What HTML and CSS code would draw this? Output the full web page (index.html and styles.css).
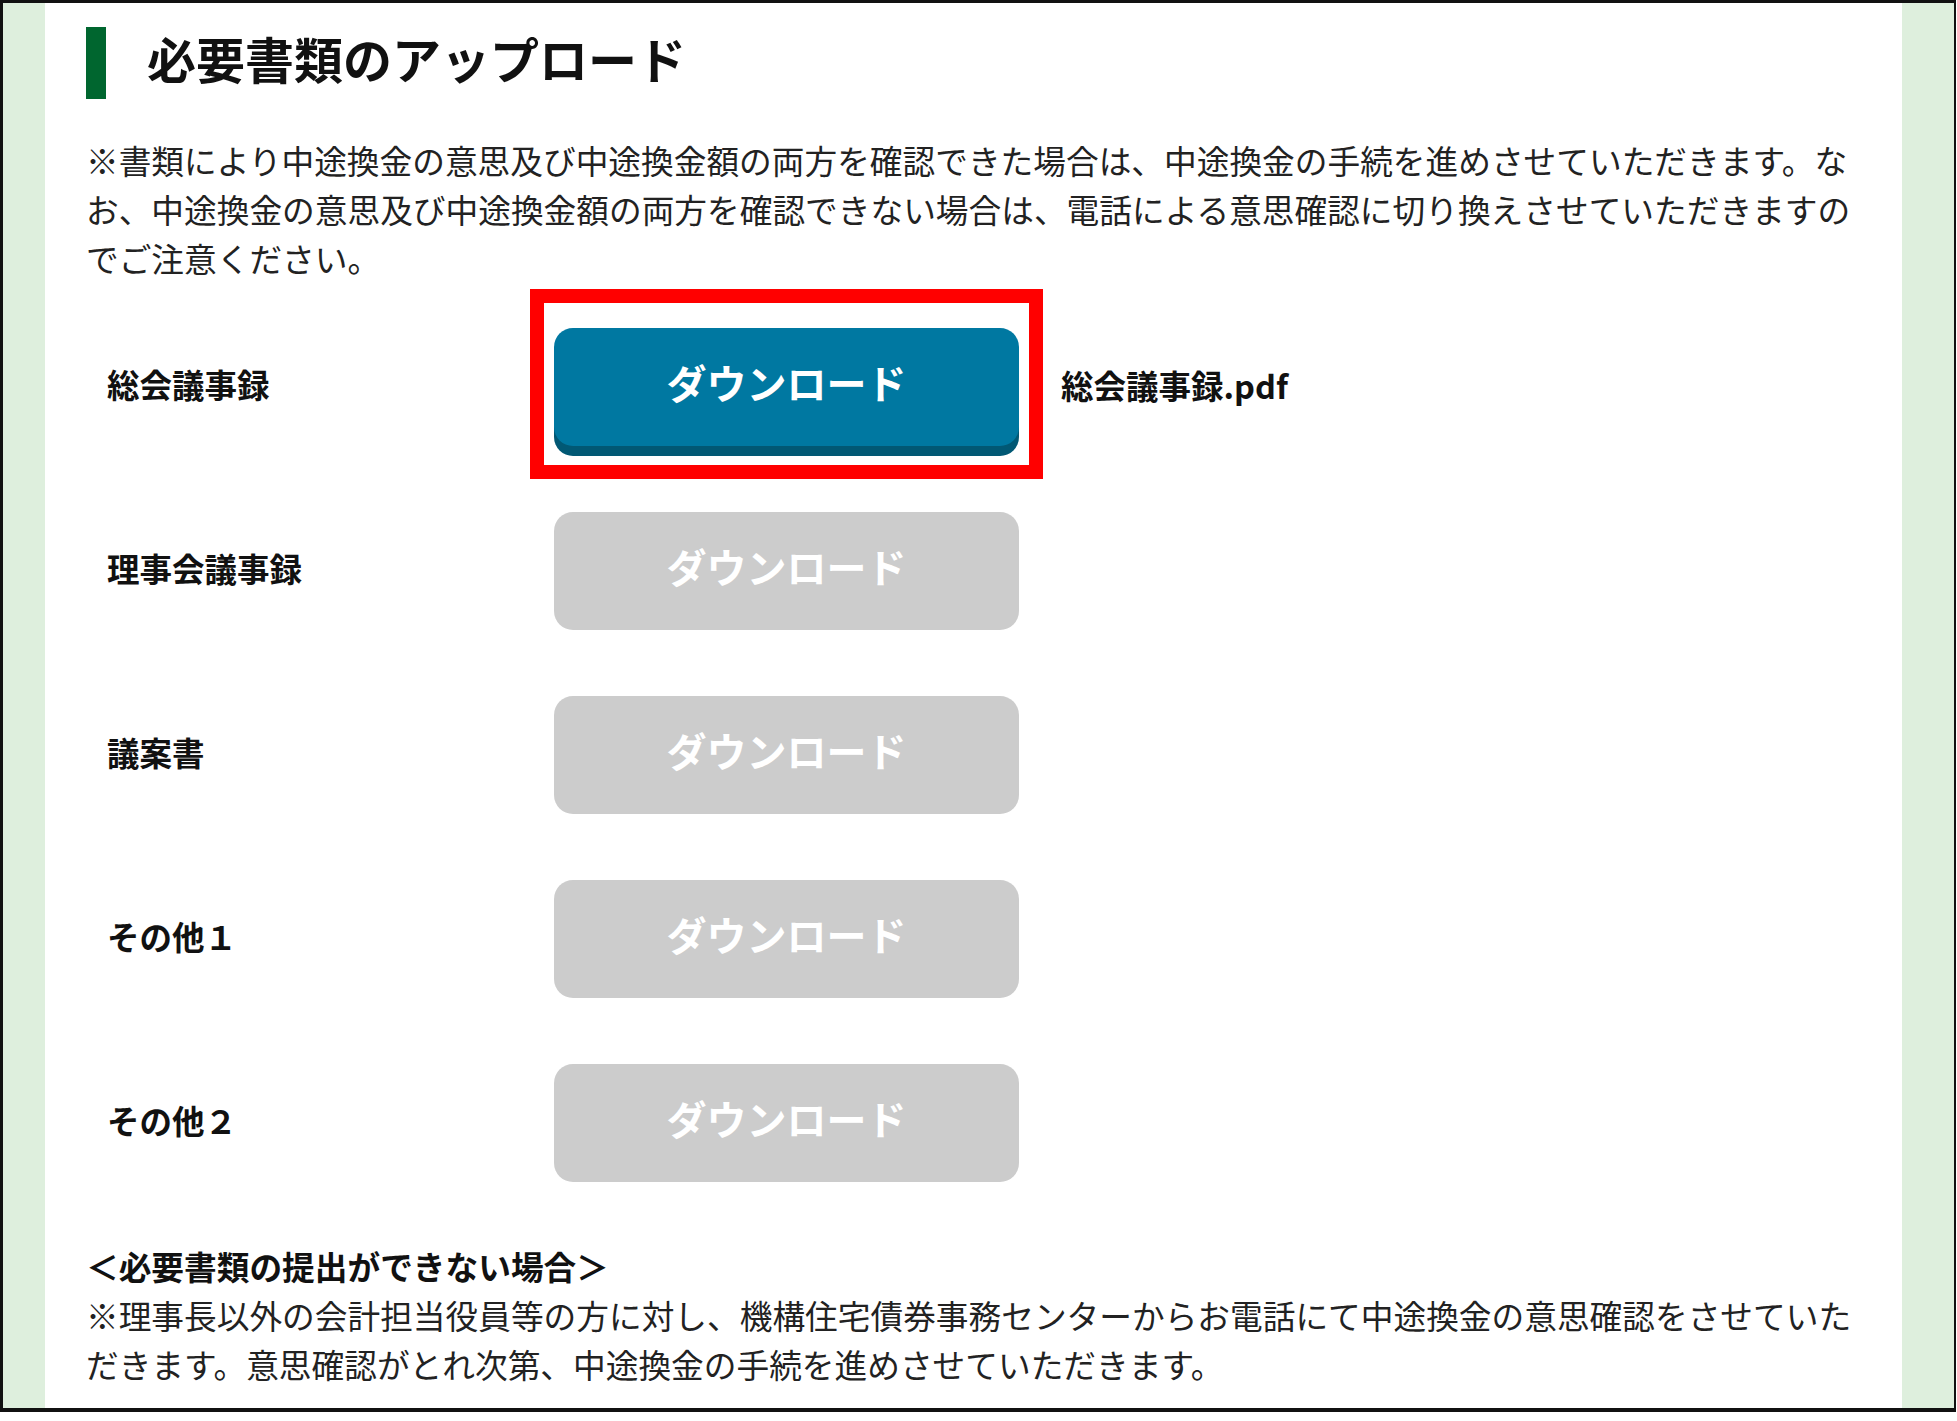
FILE: index.html
```html
<!DOCTYPE html>
<html lang="ja">
<head>
<meta charset="utf-8">
<title>必要書類のアップロード</title>
<link rel="stylesheet" href="styles.css">
</head>
<body>
<div class="frame">
  <div class="side side-left"></div>
  <main class="main">
    <h1 class="title"><span class="title-bar"></span><span class="title-text">必要書類のアップロード</span></h1>
    <p class="lead">※書類により中途換金の意思及び中途換金額の両方を確認できた場合は、中途換金の手続を進めさせていただきます。なお、中途換金の意思及び中途換金額の両方を確認できない場合は、電話による意思確認に切り換えさせていただきますのでご注意ください。</p>
    <div class="rows">
      <div class="row">
        <div class="label">総会議事録</div>
        <div class="btn-cell">
          <button class="btn btn-active">ダウンロード</button>
          <span class="highlight"></span>
        </div>
        <div class="file">総会議事録.pdf</div>
      </div>
      <div class="row">
        <div class="label">理事会議事録</div>
        <div class="btn-cell"><button class="btn btn-disabled">ダウンロード</button></div>
      </div>
      <div class="row">
        <div class="label">議案書</div>
        <div class="btn-cell"><button class="btn btn-disabled">ダウンロード</button></div>
      </div>
      <div class="row">
        <div class="label">その他１</div>
        <div class="btn-cell"><button class="btn btn-disabled">ダウンロード</button></div>
      </div>
      <div class="row">
        <div class="label">その他２</div>
        <div class="btn-cell"><button class="btn btn-disabled">ダウンロード</button></div>
      </div>
    </div>
    <div class="note">
      <p class="note-head">＜必要書類の提出ができない場合＞</p>
      <p class="note-text">※理事長以外の会計担当役員等の方に対し、機構住宅債券事務センターからお電話にて中途換金の意思確認をさせていただきます。意思確認がとれ次第、中途換金の手続を進めさせていただきます。</p>
    </div>
  </main>
  <div class="side side-right"></div>
</div>
</body>
</html>
```

FILE: styles.css
```css
* { box-sizing: border-box; }
html, body { margin: 0; padding: 0; background: #ffffff; }
body {
  font-family: "Noto Sans CJK JP", "Noto Sans", sans-serif;
  color: #222222;
}
.frame {
  width: 1956px;
  height: 1412px;
  border-style: solid;
  border-color: #111111;
  border-width: 3px 4px 4px 3px;
  display: flex;
}
.side { background: #deefdd; flex: none; }
.side-left { width: 42px; }
.side-right { width: 52px; }
.main {
  flex: 1;
  background: #ffffff;
  padding: 24px 44px 0 41px;
}
.title {
  margin: 0;
  display: flex;
  align-items: center;
  gap: 41px;
  height: 72px;
}
.title-bar {
  width: 20px;
  height: 72px;
  background: #00662f;
  flex: none;
}
.title-text {
  font-size: 49px;
  font-weight: 700;
  color: #111111;
  line-height: 62px;
  padding-bottom: 10px;
}
.lead {
  margin: 36px 0 0 0;
  font-size: 32.7px;
  line-height: 49px;
  width: 1772px;
}
.rows {
  margin-top: 46px;
  display: flex;
  flex-direction: column;
  gap: 66px;
}
.row {
  display: flex;
  align-items: center;
  height: 118px;
}
.label {
  width: 468px;
  padding-left: 21px;
  padding-bottom: 8px;
  font-size: 32.5px;
  font-weight: 700;
  color: #111111;
  flex: none;
}
.btn-cell {
  position: relative;
  width: 465px;
  height: 118px;
  flex: none;
}
.btn {
  width: 465px;
  height: 118px;
  border: none;
  border-radius: 19px;
  font-family: "Noto Sans CJK JP", sans-serif;
  font-size: 40px;
  font-weight: 700;
  color: #ffffff;
  padding: 0 0 10px 0;
  cursor: pointer;
}
.btn-active {
  background: #0078a1;
  box-shadow: 0 10px 0 #015874;
}
.btn-disabled {
  background: #cccccc;
}
.highlight {
  position: absolute;
  left: -24px;
  top: -39px;
  width: 513px;
  height: 190px;
  border: 14px solid #ff0000;
  pointer-events: none;
}
.file {
  margin-left: 42px;
  padding-bottom: 6px;
  font-size: 32.5px;
  font-weight: 700;
  color: #111111;
}
.note {
  margin-top: 59px;
  width: 1772px;
}
.note p {
  margin: 0;
  font-size: 32.7px;
  line-height: 49px;
}
.note-head { font-weight: 700; color: #111111; }
```
